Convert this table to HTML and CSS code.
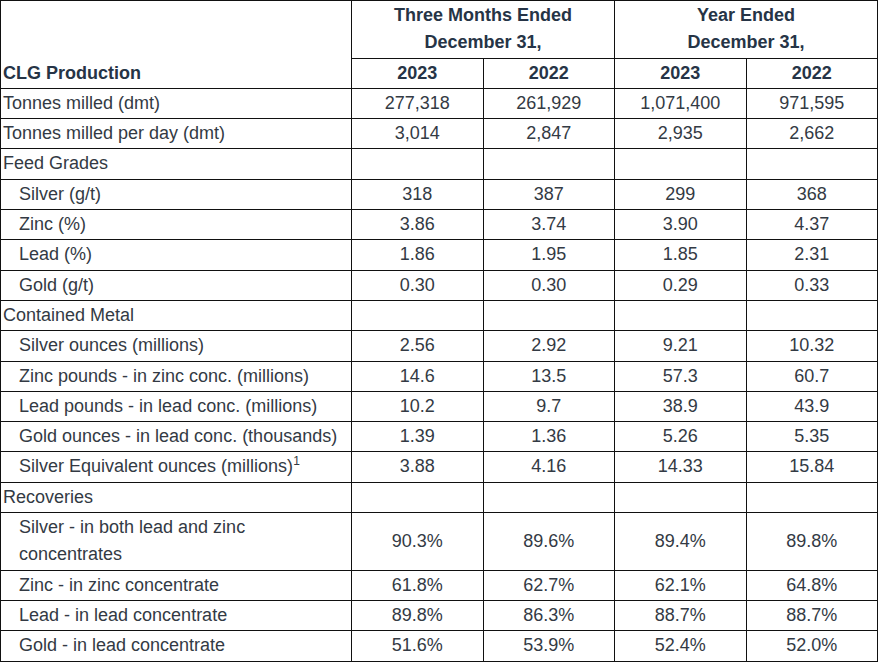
FILE: index.html
```html
<!DOCTYPE html>
<html>
<head>
<meta charset="utf-8">
<link rel="stylesheet" href="styles.css">
</head>
<body>
<table class="prod">
  <colgroup>
    <col class="c-label">
    <col class="c-num">
    <col class="c-num">
    <col class="c-num">
    <col class="c-num">
  </colgroup>
  <thead>
    <tr>
      <th class="corner" rowspan="2">CLG Production</th>
      <th class="group" colspan="2">Three Months Ended<br>December 31,</th>
      <th class="group" colspan="2">Year Ended<br>December 31,</th>
    </tr>
    <tr>
      <th class="year">2023</th>
      <th class="year">2022</th>
      <th class="year">2023</th>
      <th class="year">2022</th>
    </tr>
  </thead>
  <tbody>
    <tr><td>Tonnes milled (dmt)</td><td>277,318</td><td>261,929</td><td>1,071,400</td><td>971,595</td></tr>
    <tr><td>Tonnes milled per day (dmt)</td><td>3,014</td><td>2,847</td><td>2,935</td><td>2,662</td></tr>
    <tr><td>Feed Grades</td><td></td><td></td><td></td><td></td></tr>
    <tr><td class="sub">Silver (g/t)</td><td>318</td><td>387</td><td>299</td><td>368</td></tr>
    <tr><td class="sub">Zinc (%)</td><td>3.86</td><td>3.74</td><td>3.90</td><td>4.37</td></tr>
    <tr><td class="sub">Lead (%)</td><td>1.86</td><td>1.95</td><td>1.85</td><td>2.31</td></tr>
    <tr><td class="sub">Gold (g/t)</td><td>0.30</td><td>0.30</td><td>0.29</td><td>0.33</td></tr>
    <tr><td>Contained Metal</td><td></td><td></td><td></td><td></td></tr>
    <tr><td class="sub">Silver ounces (millions)</td><td>2.56</td><td>2.92</td><td>9.21</td><td>10.32</td></tr>
    <tr><td class="sub">Zinc pounds - in zinc conc. (millions)</td><td>14.6</td><td>13.5</td><td>57.3</td><td>60.7</td></tr>
    <tr><td class="sub">Lead pounds - in lead conc. (millions)</td><td>10.2</td><td>9.7</td><td>38.9</td><td>43.9</td></tr>
    <tr><td class="sub">Gold ounces - in lead conc. (thousands)</td><td>1.39</td><td>1.36</td><td>5.26</td><td>5.35</td></tr>
    <tr><td class="sub">Silver Equivalent ounces (millions)<sup>1</sup></td><td>3.88</td><td>4.16</td><td>14.33</td><td>15.84</td></tr>
    <tr><td>Recoveries</td><td></td><td></td><td></td><td></td></tr>
    <tr><td class="sub">Silver - in both lead and zinc<br>concentrates</td><td>90.3%</td><td>89.6%</td><td>89.4%</td><td>89.8%</td></tr>
    <tr><td class="sub">Zinc - in zinc concentrate</td><td>61.8%</td><td>62.7%</td><td>62.1%</td><td>64.8%</td></tr>
    <tr><td class="sub">Lead - in lead concentrate</td><td>89.8%</td><td>86.3%</td><td>88.7%</td><td>88.7%</td></tr>
    <tr><td class="sub">Gold - in lead concentrate</td><td>51.6%</td><td>53.9%</td><td>52.4%</td><td>52.0%</td></tr>
  </tbody>
</table>
</body>
</html>
```

FILE: styles.css
```css
html, body {
  margin: 0;
  padding: 0;
  background: #ffffff;
}

.prod {
  width: 877px;
  border-collapse: collapse;
  table-layout: fixed;
  font-family: "Liberation Sans", Arial, sans-serif;
  font-size: 18px;
  line-height: 27.3px;
  color: #333a44;
}

.c-label { width: 351px; }
.c-num { width: 131.5px; }

.prod th,
.prod td {
  border: 1px solid #111111;
  padding: 1px 2px;
  text-align: center;
  vertical-align: middle;
}

.prod th {
  font-weight: bold;
  color: #263446;
}

.prod th.corner {
  text-align: left;
  vertical-align: bottom;
}

.prod td:first-child {
  text-align: left;
}

.prod td.sub {
  padding-left: 18px;
}

.prod sup {
  font-size: 12px;
  line-height: 0;
  vertical-align: 7px;
}
```
